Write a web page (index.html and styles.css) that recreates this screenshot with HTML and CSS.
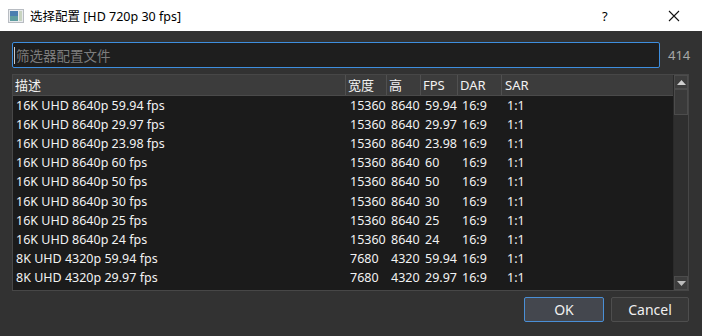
FILE: index.html
```html
<!DOCTYPE html>
<html>
<head>
<meta charset="utf-8">
<link rel="stylesheet" href="styles.css">
</head>
<body>
<div class="window">
  <div class="titlebar">
    <svg class="appicon" width="16" height="16" viewBox="0 0 16 16">
      <rect x="0.5" y="1.5" width="15" height="13" fill="#e9ecef" stroke="#b8bcc2"/>
      <rect x="2" y="3" width="8" height="10" fill="#5f9ea0"/>
      <rect x="2" y="3" width="8" height="5" fill="#4a7fb0"/>
      <rect x="11" y="3" width="3" height="10" fill="#c8d4c0"/>
    </svg>
    <span class="title">选择配置 [HD 720p 30 fps]</span>
    <span class="help">?</span>
    <svg class="close" width="12" height="12" viewBox="0 0 12 12"><path d="M1 1L11 11M11 1L1 11" stroke="#111" stroke-width="1.1"/></svg>
  </div>
  <div class="content">
    <div class="searchrow">
      <div class="search"><span class="caret"></span><span class="placeholder">筛选器配置文件</span></div>
      <span class="count">414</span>
    </div>
    <div class="table">
      <div class="grid">
        <div class="row head">
          <span>描述</span><span>宽度</span><span>高</span><span>FPS</span><span>DAR</span><span>SAR</span>
        </div>
        <div class="body">
          <div class="row"><span>16K UHD 8640p 59.94 fps</span><span>15360</span><span>8640</span><span>59.94</span><span>16:9</span><span>1:1</span></div>
          <div class="row"><span>16K UHD 8640p 29.97 fps</span><span>15360</span><span>8640</span><span>29.97</span><span>16:9</span><span>1:1</span></div>
          <div class="row"><span>16K UHD 8640p 23.98 fps</span><span>15360</span><span>8640</span><span>23.98</span><span>16:9</span><span>1:1</span></div>
          <div class="row"><span>16K UHD 8640p 60 fps</span><span>15360</span><span>8640</span><span>60</span><span>16:9</span><span>1:1</span></div>
          <div class="row"><span>16K UHD 8640p 50 fps</span><span>15360</span><span>8640</span><span>50</span><span>16:9</span><span>1:1</span></div>
          <div class="row"><span>16K UHD 8640p 30 fps</span><span>15360</span><span>8640</span><span>30</span><span>16:9</span><span>1:1</span></div>
          <div class="row"><span>16K UHD 8640p 25 fps</span><span>15360</span><span>8640</span><span>25</span><span>16:9</span><span>1:1</span></div>
          <div class="row"><span>16K UHD 8640p 24 fps</span><span>15360</span><span>8640</span><span>24</span><span>16:9</span><span>1:1</span></div>
          <div class="row"><span>8K UHD 4320p 59.94 fps</span><span>7680</span><span>4320</span><span>59.94</span><span>16:9</span><span>1:1</span></div>
          <div class="row"><span>8K UHD 4320p 29.97 fps</span><span>7680</span><span>4320</span><span>29.97</span><span>16:9</span><span>1:1</span></div>
          <div class="row"><span>8K UHD 4320p 23.98 fps</span><span>7680</span><span>4320</span><span>23.98</span><span>16:9</span><span>1:1</span></div>
        </div>
      </div>
      <div class="scrollbar">
        <div class="sbtn"><svg width="9" height="5" viewBox="0 0 9 5"><path d="M0 5L4.5 0L9 5Z" fill="#d0d0d0"/></svg></div>
        <div class="track"><div class="thumb"></div></div>
        <div class="sbtn"><svg width="9" height="5" viewBox="0 0 9 5"><path d="M0 0L4.5 5L9 0Z" fill="#bdbdbd"/></svg></div>
      </div>
    </div>
    <div class="buttons">
      <button class="btn ok">OK</button>
      <button class="btn">Cancel</button>
    </div>
  </div>
</div>
</body>
</html>
```
FILE: styles.css
```css
html, body {
  margin: 0;
  padding: 0;
  width: 702px;
  height: 336px;
  overflow: hidden;
  background: #323232;
  font-family: "Noto Sans", "Noto Sans CJK SC", sans-serif;
}
.window {
  display: flex;
  flex-direction: column;
  height: 336px;
}
.titlebar {
  height: 31px;
  background: #ffffff;
  display: flex;
  align-items: center;
  color: #000;
  flex: none;
}
.appicon {
  margin-left: 8px;
  margin-right: 6px;
}
.title {
  font-size: 12.5px;
  flex: 1;
  font-family: "Noto Sans", "Noto Sans CJK SC", sans-serif;
}
.help {
  font-size: 13px;
  width: 12px;
  margin-right: 54px;
}
.close {
  margin-right: 22px;
}
.content {
  flex: 1;
  padding: 11px 12px 0 12px;
  display: flex;
  flex-direction: column;
}
.searchrow {
  display: flex;
  align-items: center;
  height: 26px;
}
.search {
  flex: none;
  width: 645px;
  height: 24px;
  border: 1px solid #3e8ede;
  border-radius: 2px;
  background: #1e1e1e;
  display: flex;
  align-items: center;
  padding-left: 1px;
  box-sizing: content-box;
}
.caret {
  width: 1px;
  height: 17px;
  background: #c8c8c8;
}
.placeholder {
  color: #7d7d7d;
  font-size: 13.5px;
  margin-left: 1px;
  font-family: "Noto Sans CJK SC", sans-serif;
}
.count {
  margin-left: 8px;
  color: #a8a8a8;
  font-size: 13px;
}
.table {
  margin-top: 6px;
  height: 217px;
  width: 677px;
  border: 1px solid #474747;
  box-sizing: border-box;
  display: flex;
  background: #1b1b1b;
}
.grid {
  flex: 1;
  display: flex;
  flex-direction: column;
  overflow: hidden;
}
.row {
  display: grid;
  grid-template-columns: 333px 41px 34px 37px 44px 1fr;
  height: 19.1px;
  align-items: center;
  font-size: 12.5px;
  color: #f2f2f2;
  white-space: nowrap;
}
.row span {
  padding-left: 4px;
  overflow: visible;
}
.row span:first-child {
  padding-left: 3px;
  overflow: hidden;
}
.row span:last-child {
  padding-left: 5px;
}
.head {
  height: 20px;
  background: #3c3c3c;
  border-bottom: 1px solid #4a4a4a;
  flex: none;
  font-size: 13px;
}
.head span,
.head span:first-child,
.head span:last-child {
  border-right: 1px solid #505050;
  height: 20px;
  line-height: 20px;
  padding-left: 2px;
}
.head span:last-child {
  border-right: none;
  padding-left: 3px;
}
.body {
  flex: 1;
  overflow: hidden;
}
.scrollbar {
  width: 14px;
  flex: none;
  background: #2e2e2e;
  display: flex;
  flex-direction: column;
  border-left: 1px solid #2a2a2a;
}
.sbtn {
  height: 14px;
  background: #3d3d3d;
  border: 1px solid #4c4c4c;
  box-sizing: border-box;
  display: flex;
  align-items: center;
  justify-content: center;
  flex: none;
}
.track {
  flex: 1;
  background: #2f2f2f;
}
.thumb {
  height: 26px;
  background: #3a3a3a;
  border: 1px solid #4c4c4c;
  box-sizing: border-box;
}
.buttons {
  display: flex;
  justify-content: flex-end;
  gap: 7px;
  margin-top: 6px;
  padding-right: 1px;
}
.btn {
  height: 25px;
  border-radius: 2px;
  font-family: "Noto Sans", sans-serif;
  font-size: 14px;
  color: #f0f0f0;
  background: #383838;
  border: 1px solid #4e4e4e;
  padding: 0;
  width: 78px;
}
.btn.ok {
  width: 80px;
  background: #44474e;
  border-color: #4a8fd6;
}
```
